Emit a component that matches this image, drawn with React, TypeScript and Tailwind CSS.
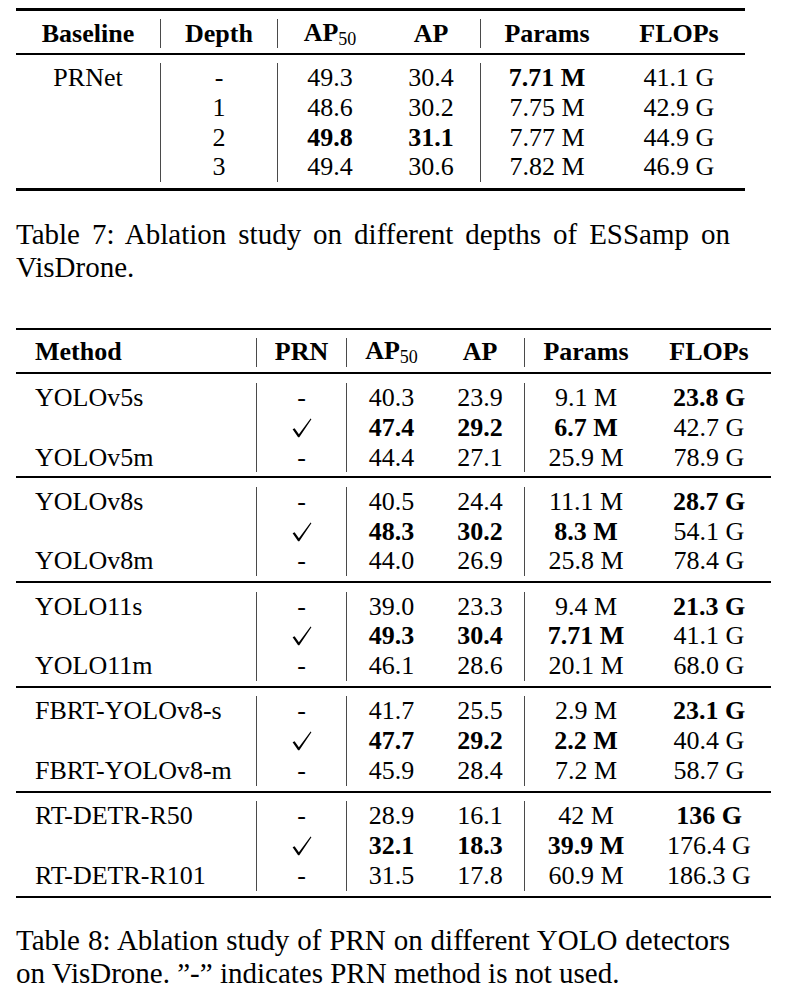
type Row = string[];

// "*" prefix marks a bold value, "v" is the check mark
const t7Head = ["Baseline", "Depth", "AP50", "AP", "Params", "FLOPs"];
const t7Rows: Row[] = [
  ["PRNet", "-", "49.3", "30.4", "*7.71 M", "41.1 G"],
  ["", "1", "48.6", "30.2", "7.75 M", "42.9 G"],
  ["", "2", "*49.8", "*31.1", "7.77 M", "44.9 G"],
  ["", "3", "49.4", "30.6", "7.82 M", "46.9 G"],
];

const t8Head = ["Method", "PRN", "AP50", "AP", "Params", "FLOPs"];
const t8Groups: Row[][] = [
  [
    ["YOLOv5s", "-", "40.3", "23.9", "9.1 M", "*23.8 G"],
    ["", "v", "*47.4", "*29.2", "*6.7 M", "42.7 G"],
    ["YOLOv5m", "-", "44.4", "27.1", "25.9 M", "78.9 G"],
  ],
  [
    ["YOLOv8s", "-", "40.5", "24.4", "11.1 M", "*28.7 G"],
    ["", "v", "*48.3", "*30.2", "*8.3 M", "54.1 G"],
    ["YOLOv8m", "-", "44.0", "26.9", "25.8 M", "78.4 G"],
  ],
  [
    ["YOLO11s", "-", "39.0", "23.3", "9.4 M", "*21.3 G"],
    ["", "v", "*49.3", "*30.4", "*7.71 M", "41.1 G"],
    ["YOLO11m", "-", "46.1", "28.6", "20.1 M", "68.0 G"],
  ],
  [
    ["FBRT-YOLOv8-s", "-", "41.7", "25.5", "2.9 M", "*23.1 G"],
    ["", "v", "*47.7", "*29.2", "*2.2 M", "40.4 G"],
    ["FBRT-YOLOv8-m", "-", "45.9", "28.4", "7.2 M", "58.7 G"],
  ],
  [
    ["RT-DETR-R50", "-", "28.9", "16.1", "42 M", "*136 G"],
    ["", "v", "*32.1", "*18.3", "*39.9 M", "176.4 G"],
    ["RT-DETR-R101", "-", "31.5", "17.8", "60.9 M", "186.3 G"],
  ],
];

const bars = [false, true, true, false, true, false];

function Check() {
  return (
    <svg width="20" height="20" viewBox="0 0 20 20" className="block">
      <polygon points="0.6,11.2 2.6,10.2 6.9,16.2 18.6,0.6 19.4,1.2 7.3,19.3 6.1,19.3" fill="#000" />
    </svg>
  );
}

function Value({ v }: { v: string }) {
  if (v === "v") return <Check />;
  if (v === "AP50")
    return (
      <span className="font-bold">
        AP<span className="font-normal text-[18px] align-[-4px]">50</span>
      </span>
    );
  if (v.startsWith("*")) return <span className="font-bold">{v.slice(1)}</span>;
  return <span>{v}</span>;
}

function Cells({ row, head, leftFirst }: { row: Row; head?: boolean; leftFirst?: boolean }) {
  return (
    <>
      {row.map((v, i) => (
        <div
          key={i}
          className={`flex items-center whitespace-nowrap leading-none ${
            leftFirst && i === 0 ? "justify-start pl-[19px]" : "justify-center"
          } ${bars[i] ? "border-l border-[#4a4a4a]" : ""} ${head ? "font-bold" : ""}`}
        >
          <Value v={v} />
        </div>
      ))}
    </>
  );
}

function Caption({ first, second }: { first: string; second: string }) {
  return (
    <div className="w-[714px] text-[29px] leading-[33px] text-black">
      <div className="whitespace-nowrap text-justify [text-align-last:justify]">{first}</div>
      <div className="whitespace-nowrap">{second}</div>
    </div>
  );
}

export default function App() {
  return (
    <div className="w-[786px] h-[997px] overflow-hidden bg-white pl-[16px] text-black [font-family:'Liberation_Serif','Times_New_Roman',serif]">
      {/* Table 7 */}
      <div className="mt-[8px] w-[729px] text-[26px]">
        <div className="h-[2.5px] bg-black" />
        <div className="pt-[8.6px] pb-[5px]">
          <div className="grid grid-cols-[144px_117px_105px_98px_133px_132px] h-[29px]">
            <Cells row={t7Head} head />
          </div>
        </div>
        <div className="h-[1.6px] bg-black" />
        <div className="pt-[8.5px] pb-[6px]">
          {t7Rows.map((r, i) => (
            <div key={i} className="grid grid-cols-[144px_117px_105px_98px_133px_132px] h-[29.8px]">
              <Cells row={r} />
            </div>
          ))}
        </div>
        <div className="h-[2.5px] bg-black" />
      </div>

      <div className="mt-[27px]">
        <Caption first="Table 7: Ablation study on different depths of ESSamp on" second="VisDrone." />
      </div>

      {/* Table 8 */}
      <div className="mt-[44px] w-[755px] text-[26px]">
        <div className="h-[2.5px] bg-black" />
        <div className="pt-[7.5px] pb-[5.4px]">
          <div className="grid grid-cols-[240px_90px_90px_88px_123px_124px] h-[29px]">
            <Cells row={t8Head} head leftFirst />
          </div>
        </div>
        {t8Groups.map((g, gi) => (
          <div key={gi}>
            <div className="h-[1.8px] bg-black" />
            <div className={gi === 0 ? "pt-[9px] pb-[4px]" : "pt-[8.6px] pb-[5px]"}>
              {g.map((r, i) => (
                <div key={i} className="grid grid-cols-[240px_90px_90px_88px_123px_124px] h-[29.8px]">
                  <Cells row={r} leftFirst />
                </div>
              ))}
            </div>
          </div>
        ))}
        <div className="h-[2.5px] bg-black" />
      </div>

      <div className="mt-[26px]">
        <Caption
          first="Table 8: Ablation study of PRN on different YOLO detectors"
          second={"on VisDrone. \u201d-\u201d indicates PRN method is not used."}
        />
      </div>
    </div>
  );
}
